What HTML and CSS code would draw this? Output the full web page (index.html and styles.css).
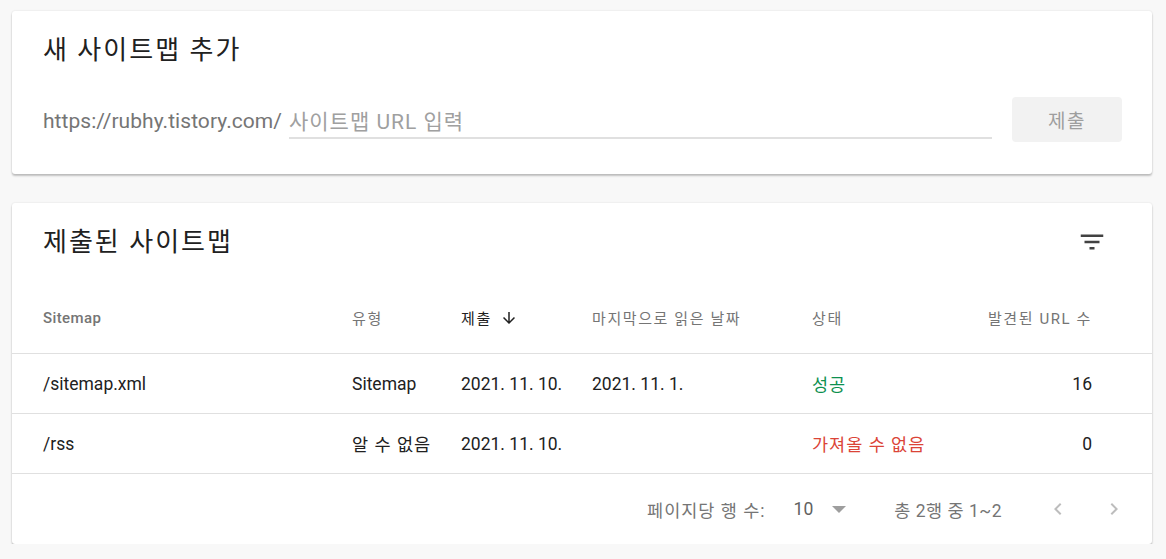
FILE: index.html
```html
<!DOCTYPE html>
<html lang="ko">
<head>
<meta charset="utf-8">
<link rel="stylesheet" href="styles.css">
</head>
<body>
<div class="page">
  <section class="card add-card">
    <h2 class="card-title">새 사이트맵 추가</h2>
    <div class="add-row">
      <span class="prefix">https://rubhy.tistory.com/</span>
      <div class="field"><input class="field-input" type="text" placeholder="사이트맵 URL 입력"></div>
      <button class="submit-btn" type="button">제출</button>
    </div>
  </section>

  <section class="card list-card">
    <div class="list-head">
      <h2 class="card-title">제출된 사이트맵</h2>
      <svg class="filter-icon" viewBox="0 0 24 24" aria-hidden="true"><path d="M10 18h4v-2h-4v2zM3 6v2h18V6H3zm3 7h12v-2H6v2z"/></svg>
    </div>
    <div class="trow thead">
      <div class="c c-bold">Sitemap</div>
      <div class="c ko">유형</div>
      <div class="c ko c-sorted">제출<svg class="sort-icon" viewBox="0 0 24 24" aria-hidden="true"><path d="M20 12l-1.41-1.41L13 16.17V4h-2v12.17l-5.58-5.59L4 12l8 8 8-8z"/></svg></div>
      <div class="c ko">마지막으로 읽은 날짜</div>
      <div class="c ko">상태</div>
      <div class="c ko c-num">발견된 URL 수</div>
    </div>
    <div class="trow tbody">
      <div class="c">/sitemap.xml</div>
      <div class="c">Sitemap</div>
      <div class="c">2021. 11. 10.</div>
      <div class="c">2021. 11. 1.</div>
      <div class="c ko ok">성공</div>
      <div class="c c-num">16</div>
    </div>
    <div class="trow tbody">
      <div class="c">/rss</div>
      <div class="c ko">알 수 없음</div>
      <div class="c">2021. 11. 10.</div>
      <div class="c"></div>
      <div class="c ko err">가져올 수 없음</div>
      <div class="c c-num">0</div>
    </div>
    <div class="pager">
      <span class="pager-label">페이지당 행 수:</span>
      <span class="pager-select"><span class="pager-value">10</span><span class="caret"></span></span>
      <span class="pager-range">총 2행 중 1~2</span>
      <span class="pager-nav">
        <svg class="chev" viewBox="0 0 24 24" aria-hidden="true"><path d="M15.41 7.41L14 6l-6 6 6 6 1.41-1.41L10.83 12z"/></svg>
        <svg class="chev" viewBox="0 0 24 24" aria-hidden="true"><path d="M10 6L8.59 7.41 13.17 12l-4.58 4.59L10 18l6-6z"/></svg>
      </span>
    </div>
  </section>
</div>
</body>
</html>
```

FILE: styles.css
```css
* { box-sizing: border-box; }
html, body { margin: 0; padding: 0; }
body {
  background: #f8f8f8;
  font-family: Roboto, "Noto Sans CJK KR", sans-serif;
  color: #212121;
}
.page {
  padding: 11px 14px 0 12px;
  display: flex;
  flex-direction: column;
  gap: 29px;
}
.card {
  background: #fff;
  border-radius: 3px;
  box-shadow: 0 2px 2px rgba(0,0,0,0.22), 0 0 2px rgba(0,0,0,0.12);
}
.card-title {
  margin: 0;
  font-size: 26px;
  font-weight: 400;
  line-height: 40px;
  color: #212121;
  letter-spacing: 2px;
}
.add-card {
  padding: 19px 30px 32px 31px;
}
.add-row {
  margin-top: 27px;
  display: flex;
  align-items: center;
  height: 45px;
}
.prefix {
  font-size: 21px;
  color: #757575;
  line-height: 26px;
  padding-top: 2px;
  margin-right: 7px;
  letter-spacing: 0.05px;
}
.field {
  flex: 1;
  border-bottom: 2px solid #e0e0e0;
  margin-top: 6px;
}
.field-input {
  display: block;
  width: 100%;
  border: 0;
  outline: 0;
  padding: 0;
  height: 30px;
  font-family: inherit;
  font-size: 21px;
  letter-spacing: 1px;
  color: #212121;
  background: transparent;
}
.field-input::placeholder { color: #a0a0a0; }
.submit-btn {
  margin-left: 20px;
  width: 110px;
  height: 45px;
  border: 0;
  border-radius: 4px;
  background: #f2f2f2;
  color: #9e9e9e;
  font-family: inherit;
  font-size: 19px;
  letter-spacing: 1.5px;
}
.list-card { padding: 0; }
.list-head {
  display: flex;
  align-items: center;
  justify-content: space-between;
  padding: 19px 45px 28px 31px;
}
.filter-icon {
  width: 30px;
  height: 30px;
  fill: #424242;
}
.trow {
  display: grid;
  grid-template-columns: 309px 109px 131px 220px 1fr auto;
  align-items: center;
  padding: 0 60px 0 31px;
  border-bottom: 1px solid #e0e0e0;
}
.thead {
  height: 64px;
  padding-bottom: 8px;
  font-size: 15px;
  color: #757575;
}
.thead .ko { letter-spacing: 1.6px; }
.c-bold { font-weight: 500; letter-spacing: 0.4px; }
.c-sorted {
  color: #212121;
  display: flex;
  align-items: center;
  gap: 8px;
}
.sort-icon { width: 18px; height: 18px; fill: #212121; }
.c-num { text-align: right; }
.tbody {
  height: 60px;
  font-size: 17.5px;
  color: #212121;
}
.tbody .ko { letter-spacing: 1px; }
.ok { color: #0d904f; }
.err { color: #db4437; }
.pager {
  height: 70px;
  display: flex;
  align-items: center;
  justify-content: flex-end;
  padding-right: 26px;
  font-size: 17.5px;
  color: #757575;
}
.pager-label { letter-spacing: 1px; }
.pager-select {
  display: flex;
  align-items: center;
  margin-left: 28px;
}
.pager-value { color: #616161; }
.caret {
  margin-left: 19px;
  width: 0;
  height: 0;
  border-left: 7px solid transparent;
  border-right: 7px solid transparent;
  border-top: 7px solid #9e9e9e;
}
.pager-range { margin-left: 48px; letter-spacing: 0.5px; }
.pager-nav {
  display: flex;
  gap: 32px;
  margin-left: 44px;
}
.chev { width: 24px; height: 24px; fill: #bdbdbd; }
```
